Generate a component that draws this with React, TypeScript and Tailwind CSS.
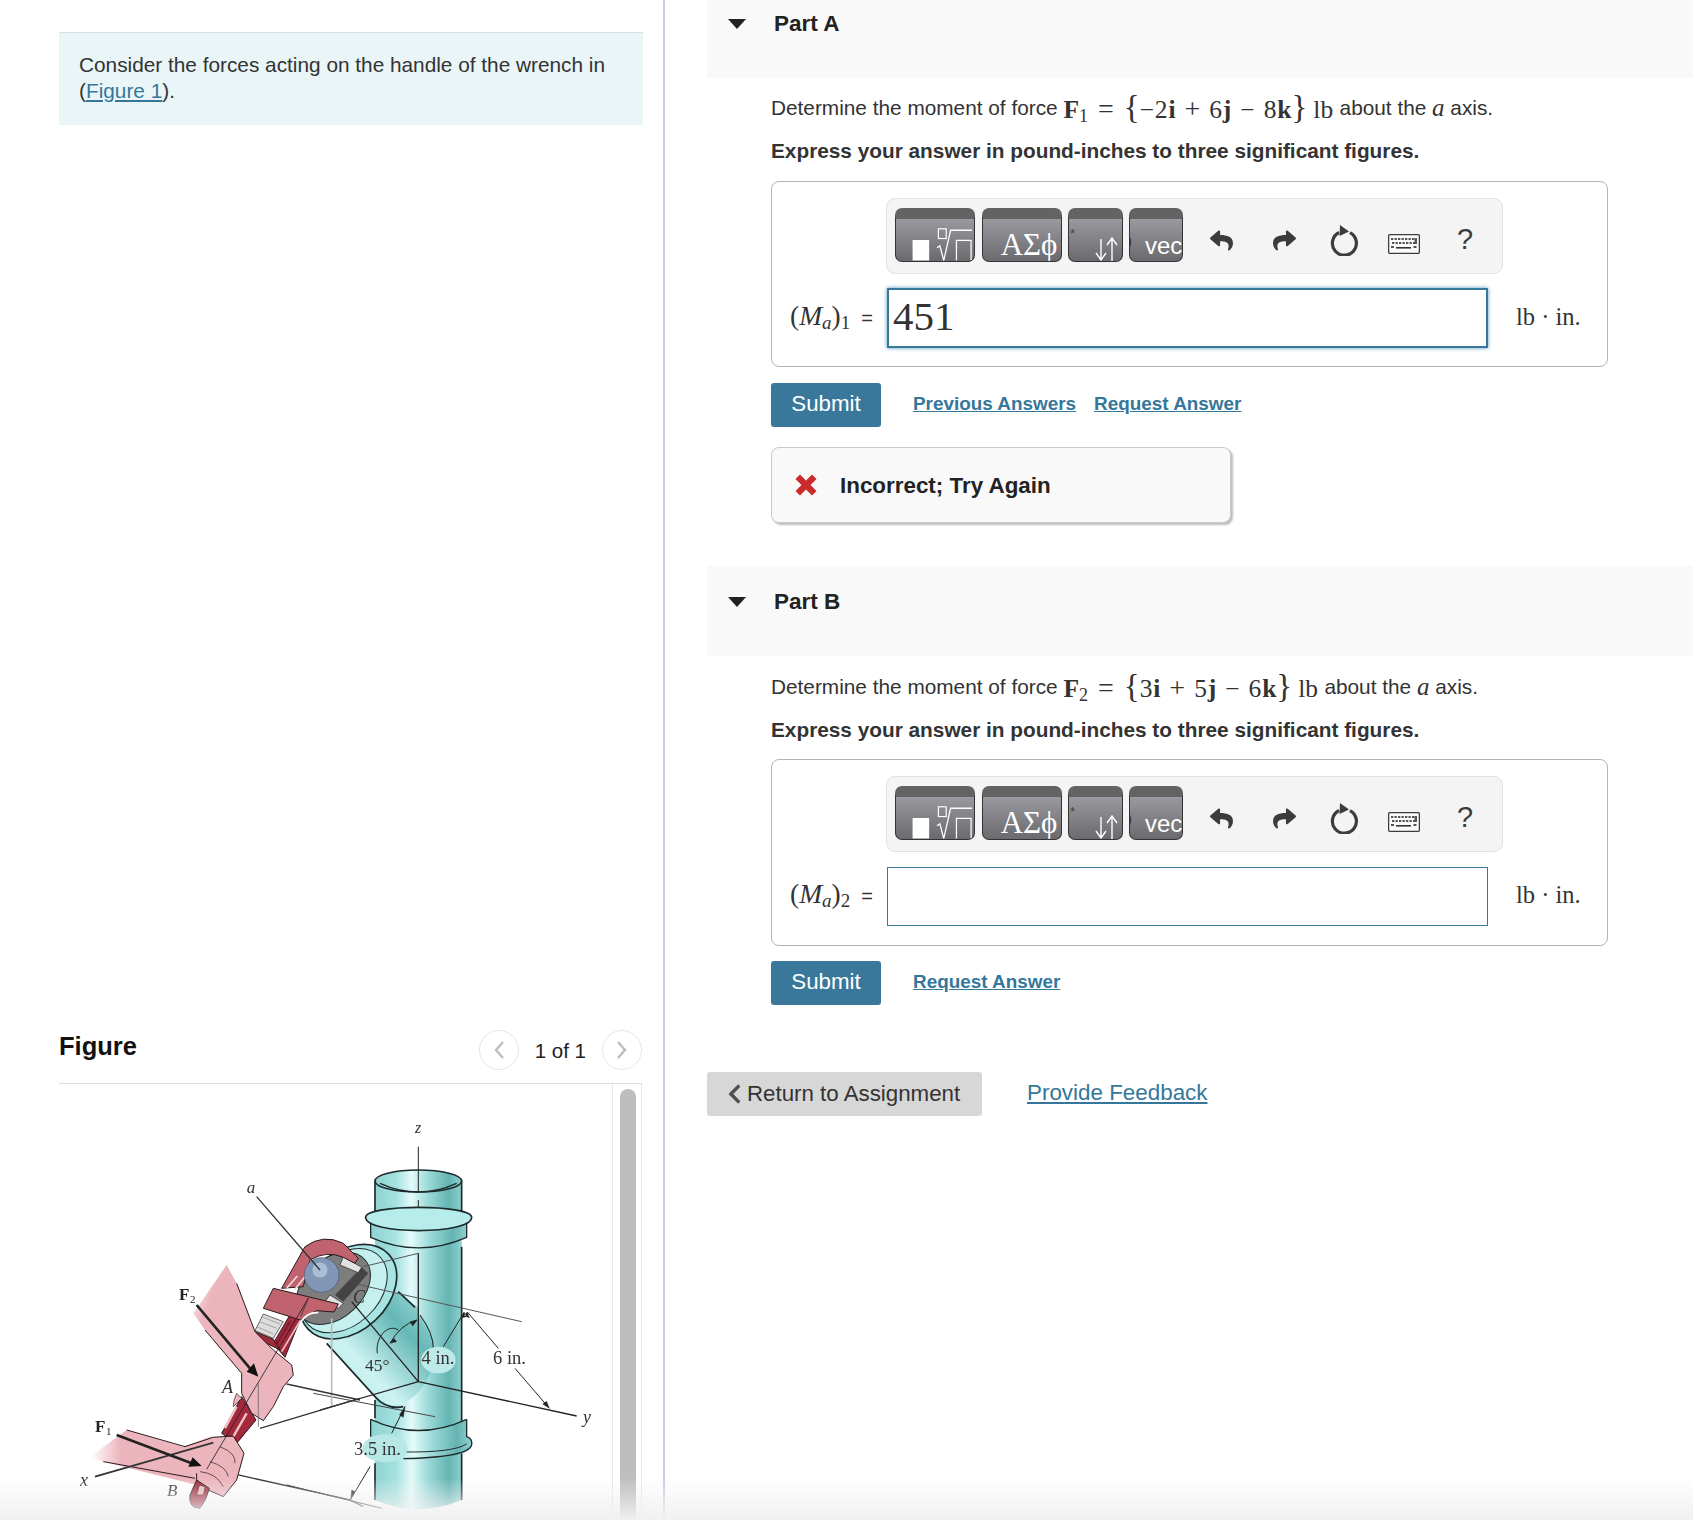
import { FaChevronLeft, FaReply, FaShare } from 'react-icons/fa';

const SANS = "font-['Liberation_Sans',Arial,sans-serif]";
const SERIF = "font-['Liberation_Serif','Times_New_Roman',serif]";

function SqrtGlyph() {
  return (
    <svg viewBox="0 0 80 42" className="h-[42px] w-[78px]" fill="none" stroke="#fff">
      <rect x="17" y="21" width="17" height="21" fill="#fff" stroke="none" />
      <rect x="43.5" y="9.5" width="8" height="10" strokeWidth="1.2" />
      <path d="M42 29 L45 27 L49 42 L56 11 H78" strokeWidth="1.3" />
      <path d="M62 42 V21.5 H77 V42" strokeWidth="1.3" />
    </svg>
  );
}

function ArrowsGlyph() {
  return (
    <svg viewBox="0 0 24 24" className="ml-[26px] h-[24px] w-[24px]" fill="none" stroke="#fff" strokeWidth="1.4">
      <path d="M6 2 V22 M1 16 L6 23 L11 16" />
      <path d="M17 24 V2 M12 8 L17 1 L22 8" />
    </svg>
  );
}

function ReloadIcon() {
  return (
    <svg viewBox="0 0 30 32" className="ml-[33px] mt-[16px] h-[32px] w-[30px]" fill="none">
      <path d="M10 8.5 A12 12 0 1 0 21 8.6" stroke="#3c3c3c" strokeWidth="3.2" />
      <path d="M11 1 L20 7.5 L10.5 12 Z" fill="#3c3c3c" />
    </svg>
  );
}

function KeyboardIcon() {
  const keys = [3, 6.5, 10, 13.5, 17, 20.5, 24];
  return (
    <svg viewBox="0 0 32 20" className="ml-[29px] mt-[26px] h-[20px] w-[32px]">
      <rect x="0.6" y="0.6" width="30.8" height="18.8" rx="1.5" fill="#fbfbfb" stroke="#3c3c3c" strokeWidth="1.3" />
      {keys.map((x) => (
        <rect key={x} x={x} y="4" width="2.3" height="2" fill="#555" />
      ))}
      {keys.map((x) => (
        <rect key={x} x={x + 1} y="8" width="2.3" height="2" fill="#555" />
      ))}
      <rect x="26.5" y="4" width="2.5" height="6" fill="#555" />
      <rect x="3" y="12" width="3" height="2" fill="#555" />
      <rect x="8" y="13" width="15" height="1.6" fill="#333" />
      <rect x="25.5" y="12" width="3" height="2" fill="#555" />
    </svg>
  );
}

function Toolbar() {
  const btn =
    'flex h-[54px] items-end overflow-hidden rounded-[7px] border border-[#333] border-t-[11px] border-t-[#636363] bg-gradient-to-b from-[#9a999f] to-[#6b6a6e] text-white';
  return (
    <div className="ml-[114px] flex h-[76px] w-[617px] items-start rounded-[9px] border border-[#e2e2e2] bg-[#f4f4f4] pl-2 pt-[9px]">
      <div className={`${btn} w-[80px]`}>
        <SqrtGlyph />
      </div>
      <div className={`${btn} ml-[7px] w-[80px] justify-center pl-[14px] ${SERIF} text-[31px] leading-[32px]`}>ΑΣϕ</div>
      <div className={`${btn} relative ml-[6px] w-[55px]`}>
        <span className="absolute left-[1px] top-[8px] text-[13px] leading-none text-[#444]">*</span>
        <ArrowsGlyph />
      </div>
      <div className={`${btn} relative ml-[6px] w-[54px] pl-[15px] ${SANS} text-[24px] leading-[30px]`}>
        <span className="absolute -top-[11px] left-[24px] text-[12px] italic leading-none text-[#333]">π</span>
        <span className="absolute left-[-3px] top-[14px] text-[15px] leading-none text-[#333]">)</span>
        vec
      </div>
      <FaReply className="ml-[27px] mt-[20px] h-[25px] w-[23px] text-[#3c3c3c]" />
      <FaShare className="ml-[40px] mt-[20px] h-[25px] w-[23px] text-[#3c3c3c]" />
      <ReloadIcon />
      <KeyboardIcon />
      <span className={`ml-[37px] mt-[14px] ${SANS} text-[29px] leading-[34px] text-[#3c3c3c]`}>?</span>
    </div>
  );
}

function AnswerLabel({ n }: { n: number }) {
  return (
    <div className={`mb-[5px] ml-[18px] flex w-[97px] shrink-0 items-baseline ${SERIF} text-[27.5px] text-[#333]`}>
      (<i>M</i>
      <i className="relative top-[4px] text-[19px]">a</i>)
      <span className="relative top-[4px] text-[19px]">{n}</span>
      <span className={`ml-[11px] ${SANS} text-[20px]`}>=</span>
    </div>
  );
}

function Unit() {
  return <div className={`mb-[2px] ml-[28px] ${SERIF} text-[24.5px] text-[#333]`}>lb · in.</div>;
}

function Link({ children, className }: { children: string; className: string }) {
  return <a className={`cursor-pointer text-[#35779a] underline ${className}`}>{children}</a>;
}

function SubmitButton() {
  return (
    <button className="flex h-[44px] w-[110px] items-center justify-center rounded-[3px] bg-[#3a789b] pb-[2px] text-[22.3px] text-white">
      Submit
    </button>
  );
}

function PartHeader({ title, className }: { title: string; className: string }) {
  return (
    <div className={`flex items-start bg-[#f9f9f9] ${className}`}>
      <svg viewBox="0 0 18 10" className="ml-[21px] mt-[8px] h-[10px] w-[18px]" fill="#222">
        <path d="M0 0 H18 L9 10 Z" />
      </svg>
      <h2 className="ml-[28px] text-[22.5px] font-bold leading-[26px] text-[#222]">{title}</h2>
    </div>
  );
}

function ForceLine({ n, parts }: { n: number; parts: [string, string, string] }) {
  return (
    <p className="flex h-[26px] items-center whitespace-pre text-[20.8px] leading-[26px] text-[#333]">
      Determine the moment of force{' '}
      <span className={`${SERIF} text-[25.5px]`}>
        <b>F</b>
        <sub className="text-[18px]">{n}</sub>
        <span className="mx-[10px] text-[28px] leading-[26px]">=</span>
        <span className="text-[33px] leading-[26px]">{'{'}</span>
        <span className="tracking-[0.8px]">{parts[0]}</span>
        <b>i</b>
        <span className="mx-[9px] text-[28px] leading-[26px]">+</span>
        <span className="tracking-[0.8px]">{parts[1]}</span>
        <b>j</b>
        <span className="mx-[9px]">−</span>
        <span className="tracking-[0.8px]">{parts[2]}</span>
        <b>k</b>
        <span className="text-[33px] leading-[26px]">{'}'}</span>
        <span className="ml-[6px]">lb</span>{' '}
      </span>
      about the <i className={`${SERIF} text-[25px]`}>a</i> axis.
    </p>
  );
}

function WrenchFigure() {
  return (
    <svg viewBox="59 1084 553 436" className="h-[436px] w-[553px] shrink-0 blur-[0.35px]" fill="none">
      <defs>
        <linearGradient id="pipe" x1="0" x2="1" y1="0" y2="0">
          <stop offset="0" stopColor="#8ed3d2" />
          <stop offset="0.25" stopColor="#a5e2e0" />
          <stop offset="0.42" stopColor="#e4fbfa" />
          <stop offset="0.6" stopColor="#9fdcda" />
          <stop offset="0.85" stopColor="#64b4b3" />
          <stop offset="1" stopColor="#8fd0cf" />
        </linearGradient>
        <linearGradient id="branch" x1="0" x2="1" y1="1" y2="0">
          <stop offset="0" stopColor="#a9e4e2" />
          <stop offset="0.35" stopColor="#cdf3f1" />
          <stop offset="0.7" stopColor="#64b7b6" />
          <stop offset="1" stopColor="#a8e2e0" />
        </linearGradient>
        <linearGradient id="arm2" x1="0" x2="1" y1="0" y2="0.6">
          <stop offset="0" stopColor="#ffffff" />
          <stop offset="0.22" stopColor="#ecb5bd" />
          <stop offset="1" stopColor="#ecb5bd" />
        </linearGradient>
        <linearGradient id="arm1" x1="0" x2="1" y1="0" y2="0">
          <stop offset="0" stopColor="#ffffff" />
          <stop offset="0.2" stopColor="#ecb5bd" />
          <stop offset="1" stopColor="#ecb5bd" />
        </linearGradient>
      </defs>

      {/* pipe, drawn in the 3x crop coordinates of the right half */}
      <g transform="translate(320 1180) scale(0.3333)" stroke="#1d2b2b" strokeWidth="5">
        <path d="M165 3 V960 Q295 1015 425 960 V3 Z" fill="url(#pipe)" stroke="none" />
        <path d="M165 3 V100 M425 3 V100 M165 200 V380 M165 660 V715 M165 850 V960 M425 200 V960" />
        <ellipse cx="295" cy="3" rx="130" ry="33" fill="url(#pipe)" />
        <path d="M180 10 Q295 62 410 10" strokeWidth="4" />
        <path d="M295 -100 V34" stroke="#222" strokeWidth="3" />
        <path d="M295 60 V118" stroke="#222" strokeWidth="3" />

        {/* upper collar and flange */}
        <path d="M152 130 V172 Q295 235 440 172 V130 Z" fill="url(#pipe)" strokeWidth="4" />
        <path d="M137 112 C137 72 455 72 455 112 C455 165 137 165 137 112 Z" fill="#b6ecea" />

        {/* lower collar and flange */}
        <path d="M152 718 Q295 785 440 718 V770 Q458 775 455 795 Q445 835 295 838 Q170 838 152 800 Z" fill="url(#pipe)" stroke="none" />
        <path d="M152 718 Q295 785 440 718 M152 718 V770 M440 718 V770 Q458 775 455 795 Q445 832 250 836" strokeWidth="4" />
        <path d="M250 816 Q400 818 440 792" strokeWidth="3" />

        {/* branch */}
        <path d="M235 335 L292 382 L296 405 Q340 470 340 510 Q340 620 250 672 Q190 690 165 650 L20 490 Z" fill="url(#branch)" stroke="none" />
        <path d="M235 335 L285 382 M20 490 L165 650 M165 650 Q200 690 250 680" />
        <path d="M300 405 Q340 460 340 505" strokeWidth="3.5" />
        <ellipse cx="85" cy="335" rx="165" ry="118" transform="rotate(-43 85 335)" fill="#a8e4e2" />
        <ellipse cx="72" cy="332" rx="148" ry="104" transform="rotate(-43 72 332)" fill="#c5f0ee" strokeWidth="3" />
        <ellipse cx="40" cy="325" rx="128" ry="88" transform="rotate(-43 40 325)" fill="#7d7d7d" strokeWidth="3" />

        {/* dimension lines */}
        <g stroke="#222" strokeWidth="3">
          <path d="M295 220 V605" strokeWidth="4" />
          <path d="M295 605 L770 708" strokeWidth="4" />
          <path d="M295 605 L0 690" strokeWidth="3.5" />
          <path d="M95 365 L295 605" strokeWidth="4" />
          <path d="M130 260 L295 220" stroke="#555" />
          <path d="M100 310 L605 425" stroke="#555" />
          <path d="M-20 640 L345 710" stroke="#444" />
          <path d="M370 500 L432 398 M535 505 L442 396 M585 565 L688 685" />
          <path d="M215 760 L255 680 M150 860 L92 958" />
          <path d="M-100 915 L185 985" />
          <path d="M172 520 C165 470 205 430 235 450 M210 490 Q240 435 290 420" />
        </g>
        <path d="M432 396 L424 414 L440 410 Z M442 396 L448 414 L432 406 Z M688 685 L668 672 L680 664 Z M255 680 L238 705 L250 712 Z M92 958 L105 935 L95 930 Z M292 420 L270 425 L278 438 Z M210 490 L222 475 L230 485 Z" fill="#222" strokeWidth="1" />
        <ellipse cx="355" cy="540" rx="52" ry="40" fill="#bdeae8" stroke="none" />
        <ellipse cx="195" cy="805" rx="68" ry="42" fill="#b7e8e6" stroke="none" />
      </g>

      {/* wrench and hands, drawn in the 3x crop coordinates of the left half */}
      <g transform="translate(60 1180) scale(0.3333)" stroke="#2a1a1c" strokeWidth="3">
        <path d="M815 415 V680" stroke="#bbb" strokeWidth="5" />
        <path d="M905 262 L925 280 L850 365 L825 345 Z" fill="#444" stroke="none" />
        <path d="M850 230 L905 262 L895 278 L840 255 Z M810 345 L850 370 L835 385 L795 365 Z" fill="#e2e2e2" strokeWidth="2" />

        {/* upper jaw */}
        <path d="M665 325 L735 200 Q790 160 850 190 L895 235 L885 250 L850 232 Q800 210 750 240 L730 320 Z" fill="#c1636f" />
        <path d="M712 288 L680 325 M735 290 L705 328" stroke="#f3d8dc" strokeWidth="5" />

        {/* handle down from the jaw */}
        <path d="M722 415 L688 408 L640 490 L675 532 Z" fill="#a2283b" />
        <path d="M722 420 L665 515" stroke="#f0c3c9" strokeWidth="5" />
        <path d="M690 425 L648 495" stroke="#7e1c2c" strokeWidth="6" />

        {/* movable jaw */}
        <path d="M640 325 L835 372 L822 396 L770 392 L722 420 L690 410 L610 385 Z" fill="#c1636f" />
        <path d="M775 398 Q745 395 722 425" stroke="#fff" strokeWidth="5" />
        <path d="M745 355 L722 410" strokeWidth="2" />

        {/* knurled nut */}
        <path d="M610 402 L670 425 L640 475 L585 452 Z" fill="#ddd" strokeWidth="2" />
        <path d="M598 425 L650 445 M590 440 L640 462 M605 410 L660 432" stroke="#a5a5a5" strokeWidth="3" />
        <path d="M585 455 L640 478 L660 510 L600 480 Z" fill="#a2283b" />

        {/* handle between the hands */}
        <path d="M545 650 L588 720 L530 790 L485 760 Z" fill="#a2283b" />
        <path d="M530 680 L495 745 M560 700 L520 770" stroke="#f0c3c9" strokeWidth="7" />

        <circle cx="785" cy="285" r="52" fill="#8197b7" stroke="#4a5a70" strokeWidth="2" />
        <circle cx="780" cy="270" r="24" fill="#abbed8" stroke="#7b8ea9" strokeWidth="2" />

        <path d="M500 255 L530 310 L585 455 L640 510 L695 555 L700 585 L670 620 L640 680 L610 722 L575 700 L545 640 L545 580 L435 450 L400 400 Z" fill="url(#arm2)" stroke="none" />
        <path d="M530 310 L585 455 L640 510 L695 555 L700 585 L670 620 L640 680 L610 722 L575 700 L545 640 L545 580 L435 450" />
        <path d="M530 640 Q520 660 520 680 L545 655 Z" fill="#ecb5bd" strokeWidth="2" />

        <path d="M90 830 L200 750 L370 800 L450 770 L520 770 L552 820 L530 900 L490 950 L410 915 L130 845 Z" fill="url(#arm1)" stroke="none" />
        <path d="M200 750 L375 800 L460 772 L520 768 L552 820 L530 900 L490 950 L410 915 L410 880 M130 845 L405 895" />
        <path d="M480 800 Q530 820 525 850 M450 845 Q500 860 505 890 M420 875 Q470 880 490 920" strokeWidth="2" />
        <path d="M410 900 L390 945 Q385 985 420 985 Q440 960 448 925 Z" fill="#a2283b" />
        <path d="M418 915 L410 945 L430 945 L436 920 Z" fill="#ecb5bd" strokeWidth="2" />

        <g stroke="#222">
          <path d="M590 50 L780 270" stroke="#333" strokeWidth="4" />
          <path d="M105 890 L460 788" strokeWidth="5" stroke="#333" />
          <path d="M600 745 L900 655 M680 612 L900 660 M535 885 L870 960 L910 980" strokeWidth="4" stroke="#333" />
          <path d="M440 868 L745 355" strokeWidth="2.5" />
          <path d="M595 610 V740" strokeWidth="2.5" stroke="#666" />
          <path d="M410 375 L570 565" strokeWidth="8" />
          <path d="M170 765 L395 850" strokeWidth="8" />
        </g>
        <path d="M595 590 L560 575 L582 550 Z M425 858 L385 860 L398 832 Z" fill="#111" stroke="none" />
      </g>

      <g className={SERIF} fill="#333">
        <text x="418" y="1133" textAnchor="middle" fontSize="16" fontStyle="italic">z</text>
        <text x="251" y="1193" textAnchor="middle" fontSize="17" fontStyle="italic">a</text>
        <text x="179" y="1300" fontSize="17" fontWeight="700" fill="#222">F</text>
        <text x="190" y="1303" fontSize="11" fill="#222">2</text>
        <text x="95" y="1432" fontSize="17" fontWeight="700" fill="#222">F</text>
        <text x="106" y="1435" fontSize="11" fill="#222">1</text>
        <text x="222" y="1393" fontSize="18" fontStyle="italic">A</text>
        <text x="167" y="1496" fontSize="17" fontStyle="italic">B</text>
        <text x="80" y="1486" fontSize="18" fontStyle="italic">x</text>
        <text x="353" y="1303" fontSize="18" fontStyle="italic">C</text>
        <text x="365" y="1371" fontSize="17.5">45°</text>
        <text x="421.5" y="1364" fontSize="18.5">4 in.</text>
        <text x="493" y="1364" fontSize="18.5">6 in.</text>
        <text x="354" y="1455" fontSize="18.5">3.5 in.</text>
        <text x="583" y="1423" fontSize="18" fontStyle="italic">y</text>
      </g>
    </svg>
  );
}

function PagerCircle({ d }: { d: string }) {
  return (
    <div className="flex h-[40px] w-[40px] items-center justify-center rounded-full border border-[#e6e6e6]">
      <svg viewBox="0 0 12 20" className="h-[20px] w-[12px]" fill="none" stroke="#bdbdbd" strokeWidth="2.4">
        <path d={d} />
      </svg>
    </div>
  );
}

export default function App() {
  return (
    <div className={`relative flex h-[1520px] w-[1693px] overflow-hidden bg-white ${SANS}`}>
      {/* left column */}
      <div className="flex w-[665px] shrink-0 flex-col border-r-2 border-[#c4d0e2] pl-[59px] pr-[20px] pt-[32px]">
        <div className="h-[93px] border-t border-[#d7e0e3] bg-[#e9f5f7] px-[20px] pt-[19px] text-[20.8px] leading-[26px] text-[#333]">
          Consider the forces acting on the handle of the wrench in (<Link className="">Figure 1</Link>).
        </div>
        <div className="mr-[1px] mt-[905px] flex h-[54px] items-start justify-between border-b border-[#dcdfe2]">
          <h3 className="mt-[1px] text-[25.5px] font-bold leading-[30px] text-[#111]">Figure</h3>
          <div className="flex items-center">
            <PagerCircle d="M10 2 L3 10 L10 18" />
            <span className="ml-[16px] mr-[16px] mt-[3px] text-[20.5px] text-[#222]">1 of 1</span>
            <PagerCircle d="M2 2 L9 10 L2 18" />
          </div>
        </div>
        <div className="mr-[1px] flex min-h-0 flex-1">
          <WrenchFigure />
          <div className="w-[30px] shrink-0 border-x border-[#e8e8e8] pl-[7px] pt-[5px]">
            <div className="h-full w-[16px] rounded-t-full bg-[#bebebe]" />
          </div>
        </div>
      </div>

      {/* right column */}
      <div className="flex-1 pl-[42px] text-[#333]">
        <PartHeader title="Part A" className="h-[78px] pt-[11px]" />
        <div className="ml-[64px] mt-[17px]">
          <ForceLine n={1} parts={['−2', '6', '8']} />
          <p className="mt-[17px] text-[20.8px] font-bold leading-[26px]">Express your answer in pound-inches to three significant figures.</p>
          <div className="mt-[17px] w-[837px] rounded-[8px] border border-[#b4b4b4] pb-[18px] pt-[16px]">
            <Toolbar />
            <div className="mt-[14px] flex items-center">
              <AnswerLabel n={1} />
              <div className={`flex h-[60px] w-[601px] shrink-0 items-center border-2 border-[#36789a] pb-[2px] pl-[4px] shadow-[0_0_4px_#5a98b8] ${SERIF} text-[41px] text-[#333]`}>451</div>
              <Unit />
            </div>
          </div>
          <div className="mt-[16px] flex items-center">
            <SubmitButton />
            <Link className="mb-[2px] ml-[32px] text-[18.9px] font-bold">Previous Answers</Link>
            <Link className="mb-[2px] ml-[18px] text-[18.9px] font-bold">Request Answer</Link>
          </div>
          <div className="mt-[20px] flex h-[76px] w-[460px] items-center rounded-[8px] border border-[#cacaca] bg-[#f9f9f9] pl-[23px] shadow-[2px_2px_2px_#bdbdbd]">
            <svg viewBox="0 0 22 22" className="h-[22px] w-[22px]" fill="#cc2b2b">
              <path d="M5 0.5 L11 6.5 L17 0.5 L21.5 5 L15.5 11 L21.5 17 L17 21.5 L11 15.5 L5 21.5 L0.5 17 L6.5 11 L0.5 5 Z" />
            </svg>
            <span className="ml-[23px] mt-[2px] text-[22.4px] font-bold text-[#222]">Incorrect; Try Again</span>
          </div>
        </div>

        <PartHeader title="Part B" className="mt-[43px] h-[90px] pt-[23px]" />
        <div className="ml-[64px] mt-[18px]">
          <ForceLine n={2} parts={['3', '5', '6']} />
          <p className="mt-[17px] text-[20.8px] font-bold leading-[26px]">Express your answer in pound-inches to three significant figures.</p>
          <div className="mt-[16px] w-[837px] rounded-[8px] border border-[#b4b4b4] pb-[19px] pt-[16px]">
            <Toolbar />
            <div className="mt-[15px] flex items-center">
              <AnswerLabel n={2} />
              <div className="h-[59px] w-[601px] shrink-0 border border-[#36789a]" />
              <Unit />
            </div>
          </div>
          <div className="mt-[15px] flex items-center">
            <SubmitButton />
            <Link className="mb-[2px] ml-[32px] text-[18.9px] font-bold">Request Answer</Link>
          </div>
        </div>

        <div className="mt-[67px] flex items-center">
          <button className="flex h-[44px] w-[275px] items-center rounded-[3px] bg-[#d7d7d7] pl-[20px] text-[22.3px] text-[#333]">
            <FaChevronLeft className="h-[22px] w-[15px] text-[#505050]" />
            <span className="ml-[5px]">Return to Assignment</span>
          </button>
          <Link className="mb-[2px] ml-[45px] text-[22.4px]">Provide Feedback</Link>
        </div>
      </div>

      {/* the page fades out along the bottom edge of the capture */}
      <div className="pointer-events-none absolute inset-x-0 bottom-0 h-[42px] bg-gradient-to-b from-transparent to-[#f0f0f0]" />
    </div>
  );
}
